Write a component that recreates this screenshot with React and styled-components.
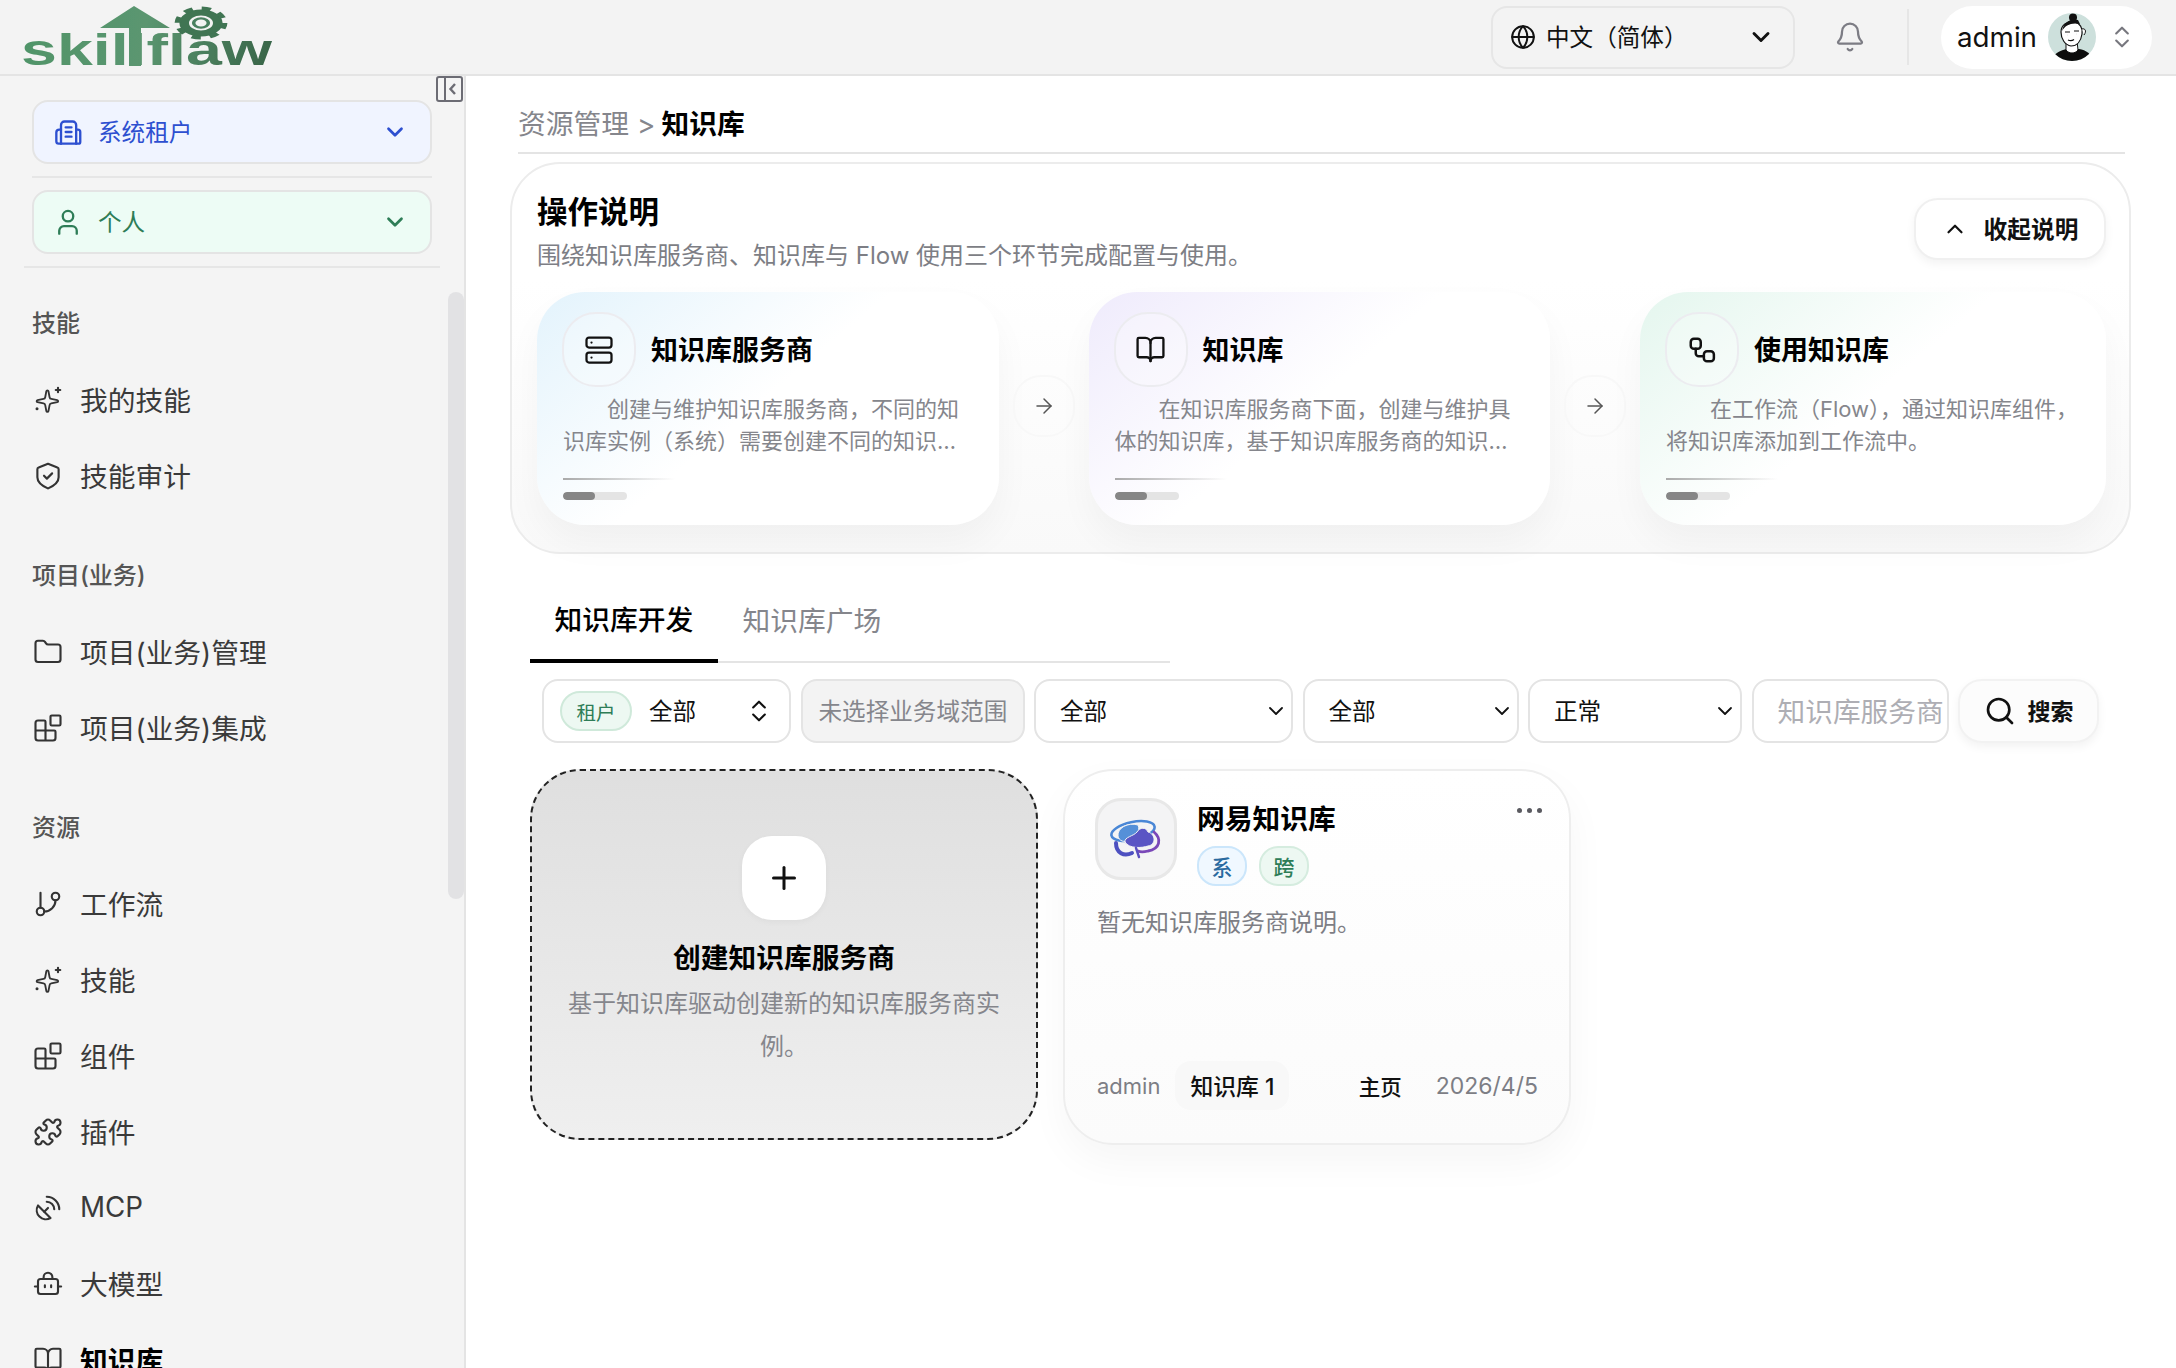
import React from "react";
import styled, { createGlobalStyle } from "styled-components";
import {
  ChevronDown, ChevronUp, ChevronsUpDown, Globe, Bell, Folder, Blocks, Puzzle,
  SatelliteDish, BookOpen, Server, ArrowRight, Plus, Search,
} from "lucide-react";

const Global = createGlobalStyle`
  html, body { margin: 0; padding: 0; background: #fff; }
  body { font-family: Inter, "Noto Sans CJK SC", sans-serif; color: #000; }
  * { box-sizing: border-box; }
`;

const Page = styled.div`
  width: 2176px; height: 1368px; overflow: hidden;
  display: grid; grid-template-rows: 76px 1fr; grid-template-columns: 466px 1fr;
`;

/* ---------- header ---------- */
const TopBar = styled.header`
  grid-column: 1 / 3; display: flex; align-items: center; justify-content: space-between;
  background: #f3f3f3; border-bottom: 2px solid #e4e4e4; padding-right: 24px;
`;
const TopRight = styled.div`display: flex; align-items: center;`;
const LangSelect = styled.div`
  width: 304px; height: 63px; border: 2px solid #e6e6e6; border-radius: 16px;
  display: flex; align-items: center; padding: 0 18px 2px 17px; font-size: 23.6px; color: #111;
  svg:first-child { margin-right: 10px; margin-top: 2px; }
  svg:last-child { margin-left: auto; margin-top: 2px; }
`;
const BellWrap = styled.div`display: flex; margin: 0 41px 0 39px; color: #7c7c84;`;
const VLine = styled.div`width: 2px; height: 56px; background: #e6e6e6; margin-right: 32px;`;
const UserPill = styled.div`
  width: 211px; height: 63px; border-radius: 32px; background: #fff; display: flex; align-items: center;
  padding-left: 16px; font-size: 27.76px; color: #111;
  > svg:nth-of-type(1) { margin-left: 11px; }
  > svg:nth-of-type(2) { margin-left: 12px; color: #77777e; }
`;

/* ---------- sidebar ---------- */
const Side = styled.aside`
  position: relative; background: #f4f4f4; border-right: 2px solid #e4e4e4;
  padding: 24px 32px 0; overflow: hidden;
`;
const CollapseBtn = styled.div`position: absolute; top: 0; right: 0; display: flex;`;
const ScrollThumb = styled.div`
  position: absolute; top: 216px; right: 0; width: 16px; height: 607px;
  border-radius: 8px; background: #e2e2e4;
`;
const ScopeSelect = styled.div`
  height: 64px; border: 2px solid #e4e4e4; border-radius: 16px; background: ${p => p.$bg}; color: ${p => p.$fg};
  display: flex; align-items: center; padding: 0 22px 2px 20px; font-size: 23.6px;
  > svg:first-child { margin-right: 16px; margin-top: 2px; }
  > svg:last-child { margin-left: auto; margin-top: 2px; }
`;
const SideRule = styled.div`
  height: 2px; background: #e6e6e6; margin: 12px ${p => p.$out ? "-8px" : "0"} ${p => p.$out ? "0" : "12px"};
`;
const NavGroup = styled.section`margin-top: ${p => p.$first ? "35px" : "41px"};`;
const NavLabel = styled.div`
  height: 40px; line-height: 42px; margin-bottom: 19px; font-size: 24px; font-weight: 500; color: #555;
`;
const NavItem = styled.div`
  height: 76px; display: flex; align-items: center; gap: 17px; padding: 0 0 2px 1px;
  font-size: 27.76px; color: ${p => p.$active ? "#000" : "#3a3a3a"}; font-weight: ${p => p.$active ? 600 : 400};
  svg { flex: none; width: 30px; height: 30px; color: #333; margin-top: 2px; }
`;

/* ---------- main ---------- */
const Main = styled.main`padding: 0 51px 0 52px; overflow: hidden; background: #fff;`;
const Crumbs = styled.div`
  height: 78px; padding-top: 29px; border-bottom: 2px solid #e4e4e4; display: flex; gap: 8px;
  font-size: 27.76px; line-height: 38px; color: #85868c;
  b { color: #000; font-weight: 600; margin-left: -2px; }
`;
const GuidePanel = styled.section`
  margin: 8px -6px 0 -8px; height: 392px; border: 2px solid #ececec; border-radius: 50px;
  background: linear-gradient(180deg, #fff 30%, #f9f9f9 100%);
  padding: 28px 23px 0 25px;
`;
const GuideHead = styled.div`display: flex; justify-content: space-between; height: 80px;`;
const GuideTitle = styled.h2`margin: 0; font-size: 30.5px; line-height: 40px; font-weight: 700;`;
const GuideSub = styled.p`margin: 8px 0 0; font-size: 24px; line-height: 32px; color: #7d7e85;`;
const CollapseGuide = styled.button`
  margin-top: 6px; width: 192px; height: 62px; border-radius: 24px; border: 2px solid #f0f0f0; background: #fff;
  box-shadow: 0 4px 10px rgba(0,0,0,.05); font: 600 23.7px Inter, "Noto Sans CJK SC", sans-serif; color: #111;
  display: flex; align-items: center; justify-content: center; gap: 16px; padding: 0 0 2px;
  svg { margin-top: 2px; }
`;
const StepRow = styled.div`display: flex; margin-top: 20px;`;
const StepCard = styled.article`
  flex: 1 1 0; height: 233px; border-radius: 48px; padding: 20px 24px 0 26px;
  background: linear-gradient(140deg, ${p => p.$tint} 0%, #ffffff 48%);
  box-shadow: 0 18px 36px rgba(0,0,0,.04);
`;
const StepHead = styled.div`display: flex; align-items: center; gap: 15px; margin-left: -1px;`;
const StepIcon = styled.div`
  width: 74px; height: 75px; border-radius: 34px; border: 2px solid #ececf0; display: flex;
  align-items: center; justify-content: center; color: #111; background: rgba(255,255,255,.25);
`;
const StepTitle = styled.h3`margin: 0 0 2px; font-size: 27px; font-weight: 700;`;
const StepDesc = styled.p`
  margin: 6px 0 0; width: ${p => p.$w}px; font-size: 22px; line-height: 32px; color: #85868c; text-indent: 2em;
  display: -webkit-box; -webkit-box-orient: vertical; -webkit-line-clamp: 2; overflow: hidden; height: 64px;
`;
const FadeRule = styled.div`
  margin-top: 21px; width: 112px; height: 2px; background: linear-gradient(90deg, #aaa, rgba(170,170,170,0));
`;
const Progress = styled.div`margin-top: 12px; width: 64px; height: 8px; border-radius: 4px; background: #e4e4e4; overflow: hidden;`;
const ProgressFill = styled.div`width: 32px; height: 8px; border-radius: 4px; background: #868686;`;
const StepLink = styled.div`
  flex: 0 0 90px; display: flex; align-items: center; justify-content: center; padding-bottom: 5px; color: #555;
`;
const StepLinkRing = styled.div`
  width: 62px; height: 62px; border-radius: 28px; border: 2px solid #f8f8f8; display: flex;
  align-items: center; justify-content: center;
`;

const Body = styled.div`padding-left: 12px;`;
const Tabs = styled.div`
  margin-top: 47px; width: 640px; height: 62px; border-bottom: 2px solid #e4e4e4; display: flex;
`;
const Tab = styled.div`
  width: 188px; height: 62px; white-space: nowrap; text-align: center; font-size: 27.76px; line-height: 38px;
  color: ${p => p.$on ? "#000" : "#85868c"}; font-weight: ${p => p.$on ? 500 : 400};
  padding-top: ${p => p.$on ? 0 : 1}px;
  border-bottom: ${p => p.$on ? "4px solid #000" : "0"};
`;
const Filters = styled.div`display: flex; gap: 9.5px; padding: 16px 0 0 12px;`;
const Field = styled.div`
  width: ${p => p.$w}px; height: 64px; flex: none; border: 2px solid #e4e4e4; border-radius: 16px; overflow: hidden;
  background: ${p => p.$off ? "#f3f3f3" : "#fff"}; color: ${p => p.$off ? "#85868c" : "#111"};
  display: flex; align-items: center; font-size: 23.6px; white-space: nowrap; padding: 0 3px 2px ${p => p.$pl}px;
  > svg { margin-left: auto; margin-top: 2px; }
`;
const FieldTag = styled.span`
  width: 72px; height: 40px; border-radius: 20px; background: #edf8f2; border: 2px solid #cfe9da; color: #2e7d57;
  display: flex; align-items: center; justify-content: center; font-size: 19.5px; margin: 2px 17px 0 0; flex: none;
`;
const Placeholder = styled.span`font-size: 27.7px; color: #aeaeb4;`;
const SearchBtn = styled.button`
  width: 141px; height: 64px; flex: none; border: 2px solid #f2f2f2; border-radius: 24px; background: #fcfcfc;
  box-shadow: 0 4px 10px rgba(0,0,0,.05); display: flex; align-items: center; justify-content: center; gap: 12px;
  font: 600 23px Inter, "Noto Sans CJK SC", sans-serif; color: #111; padding: 0 0 2px;
  svg { margin-top: 2px; }
`;
const CardGrid = styled.div`display: flex; gap: 25px; margin-top: 26px; align-items: flex-start;`;
const CreateCard = styled.article`
  width: 508px; height: 371px; border: 2px dashed #222; border-radius: 50px;
  background: linear-gradient(180deg, #dfdfdf, #efefef);
  display: flex; flex-direction: column; align-items: center; padding: 65px 30px 0; text-align: center;
`;
const PlusTile = styled.div`
  width: 84px; height: 84px; border-radius: 30px; background: #fff; box-shadow: 0 2px 6px rgba(0,0,0,.04);
  display: flex; align-items: center; justify-content: center; color: #111;
`;
const CreateTitle = styled.h3`margin: 18px 0 0; font-size: 27.76px; line-height: 40px; font-weight: 600;`;
const CreateDesc = styled.p`margin: 4px 0 0; font-size: 24px; line-height: 43px; color: #85868c;`;
const ProviderCard = styled.article`
  width: 508px; height: 376px; border: 2px solid #eeeeee; border-radius: 50px;
  background: linear-gradient(180deg, #fff, #fbfbfb); box-shadow: 0 16px 40px rgba(0,0,0,.04);
  padding: 27px 27px 33px 30px; display: flex; flex-direction: column;
`;
const ProviderHead = styled.div`display: flex;`;
const ProviderTile = styled.div`
  width: 82px; height: 82px; border-radius: 26px; border: 3px solid #e8e8e8; background: #f4f4f5;
  display: flex; align-items: center; justify-content: center; flex: none; margin-right: 20px;
`;
const ProviderName = styled.h3`margin: 1px 0 0; font-size: 27.76px; line-height: 40px; font-weight: 600;`;
const BadgeRow = styled.div`display: flex; gap: 12px; margin-top: 7px;`;
const Badge = styled.span`
  width: 50px; height: 40px; border-radius: 19px; border: 2px solid ${p => p.$line}; background: ${p => p.$bg}; color: ${p => p.$fg};
  display: flex; align-items: center; justify-content: center; font-size: 21px; font-weight: 500;
`;
const MoreDots = styled.div`margin-left: auto; display: flex; gap: 5px; height: 6px; margin-top: 10px;`;
const MoreDot = styled.i`width: 5px; height: 5px; border-radius: 50%; background: #5a5a60;`;
const ProviderDesc = styled.p`margin: 19px 0 0; font-size: 24px; line-height: 36px; color: #7d7e85; padding-left: 2px;`;
const ProviderFoot = styled.div`margin-top: auto; display: flex; align-items: center; padding: 0 4px 0 2px; font-size: 22px; color: #7d7e85;`;
const CountPill = styled.span`
  height: 49px; padding: 0 15px; margin-left: 15px; border-radius: 16px; background: #f8f8f8; color: #111;
  display: flex; align-items: center; font-weight: 500; font-size: 22.8px;
`;
const HomeLink = styled.span`margin-left: auto; margin-right: 34px; color: #111; font-weight: 500; font-size: 21.5px;`;
const DateText = styled.span`font-size: 23px;`;

/* ---------- drawn icons ---------- */
const Svg = ({ s = 24, w = 2, children, ...r }) => (
  <svg width={s} height={s} viewBox="0 0 24 24" fill="none" stroke="currentColor" strokeWidth={w} strokeLinecap="round" strokeLinejoin="round" {...r}>{children}</svg>
);
const SparkIcon = () => (
  <Svg w={1.7}>
    <path transform="translate(1.2 2.6) scale(.86)" d="M11.017 2.814a1 1 0 0 1 1.966 0l1.051 5.558a2 2 0 0 0 1.594 1.594l5.558 1.051a1 1 0 0 1 0 1.966l-5.558 1.051a2 2 0 0 0-1.594 1.594l-1.051 5.558a1 1 0 0 1-1.966 0l-1.051-5.558a2 2 0 0 0-1.594-1.594l-5.558-1.051a1 1 0 0 1 0-1.966l5.558-1.051a2 2 0 0 0 1.594-1.594z" />
    <path d="M20 2.200v3.600M18.200 4h3.600" /><path d="M3.200 19h.01" strokeWidth="2.400" />
  </Svg>
);
const ShieldIcon = () => (
  <Svg w={1.7}>
    <path d="M12 2.200l7.500 3c.6.2 1 .8 1 1.400V13c0 3.800-3.600 6.700-8 8.700a1 1 0 0 1-1 0c-4.400-2-8-4.900-8-8.700V6.600c0-.6.4-1.200 1-1.400z" />
    <path d="M8.800 11.800l2.300 2.300 4.200-4.200" />
  </Svg>
);
const FlowIcon = () => (
  <Svg w={1.7}>
    <path d="M6 15V3" /><circle cx="6" cy="18" r="3" /><circle cx="18" cy="6" r="3" /><path d="M18 9a9 9 0 0 1-9 9" />
  </Svg>
);
const BotIcon = () => (
  <Svg w={1.7}>
    <rect x="4" y="8" width="16" height="12" rx="2" /><path d="M8.500 8V6.500a3.500 3.500 0 0 1 7 0V8" />
    <path d="M1.500 14H4M20 14h2.500" /><path d="M9.500 13v1.500M14.500 13v1.500" />
  </Svg>
);
const BuildingIcon = () => (
  <Svg s={28} w={2}>
    <path d="M6 22V6a3 3 0 0 1 3-3h7a3 3 0 0 1 3 3v16" />
    <path d="M6 10H4.500A2.500 2.500 0 0 0 2 12.500V20a2 2 0 0 0 2 2h17a1.500 1.500 0 0 0 1.500-1.500V12a2 2 0 0 0-2-2H19" />
    <path d="M10 8h5M10 12h5M10 16h5" />
  </Svg>
);
const PersonIcon = () => (
  <Svg s={28} w={2}>
    <circle cx="12" cy="7" r="4.500" /><path d="M4.500 22v-2.500a4 4 0 0 1 4-4h7a4 4 0 0 1 4 4V22" />
  </Svg>
);
const LinkIcon = () => (
  <Svg s={30} w={2}>
    <rect x="3" y="3" width="8" height="8" rx="2.500" /><rect x="13.500" y="13" width="8" height="8" rx="2.500" />
    <path d="M7 11v3.500a2.500 2.500 0 0 0 2.500 2.500h4" />
  </Svg>
);
const CollapseIcon = () => (
  <svg width="28" height="26" viewBox="0 0 28 26" fill="none" stroke="#6c6c74" strokeWidth="2">
    <rect x="1" y="1" width="25" height="24" rx="2" /><path d="M9 1v24" /><path d="M19 8l-4.500 5 4.500 5" strokeWidth="2.400" />
  </svg>
);
const Logo = () => (
  <svg width="290" height="74" viewBox="0 0 290 74" style={{ display: "block" }}>
    <defs>
      <linearGradient id="lg" gradientUnits="userSpaceOnUse" x1="22" y1="0" x2="272" y2="40">
        <stop offset="0" stopColor="#4f9468" /><stop offset=".5" stopColor="#5b9670" /><stop offset="1" stopColor="#396649" />
      </linearGradient>
      <filter id="sf"><feGaussianBlur stdDeviation=".5" /></filter>
    </defs>
    <g filter="url(#sf)">
      <path d="M134 6L170 28H141V66H129V28H100z" fill="url(#lg)" />
      <text x="21" y="65" fontFamily="Liberation Sans" fontWeight="700" fontSize="44" textLength="251" lengthAdjust="spacingAndGlyphs" fill="url(#lg)">skillflaw</text>
      <g transform="translate(201 23) scale(1.6 1)" fill="none" stroke="#3f7452">
        <circle r="10.500" strokeWidth="6" />
        <circle r="14.500" strokeWidth="4" strokeDasharray="5.700 5.690" />
        <circle r="4.600" strokeWidth="2.200" stroke="#4a8060" />
      </g>
    </g>
  </svg>
);
const Avatar = () => (
  <svg width="48" height="48" viewBox="0 0 48 48">
    <defs><clipPath id="ac"><ellipse cx="24" cy="24" rx="24" ry="24" /></clipPath></defs>
    <g clipPath="url(#ac)">
      <rect width="48" height="48" fill="#cde0dc" />
      <path d="M4 48c1-8 9-11 15-12h12c7 1 13 5 14 12z" fill="#0c0c0c" />
      <path d="M18 30v7c3 4 9 4 12 0l-1-9z" fill="#fff" stroke="#111" strokeWidth="1" />
      <path d="M13 19c0-7 6-11 13-10 6 1 9 6 8 12-1 7-5 12-11 12-6-1-10-7-10-14z" fill="#fff" stroke="#111" strokeWidth="1.200" />
      <path d="M14 18c3-6 10-9 18-7l-2-4c-6-2-14 1-16 11z" fill="#111" />
      <circle cx="25" cy="4.500" r="4" fill="#111" />
      <path d="M34 16c3-1 5 2 2 6" fill="#fff" stroke="#111" strokeWidth="1" />
      <path d="M17 19h5M26 18h5M19 22h.1M28 21h.1M20 27c2 1 4 1 6-.500" stroke="#111" strokeWidth="1.200" fill="none" />
    </g>
  </svg>
);
const CloudLogo = () => (
  <svg width="52" height="40" viewBox="0 0 52 40">
    <ellipse cx="23" cy="12" rx="22" ry="9" transform="rotate(-12 23 12)" fill="none" stroke="#4a87d6" strokeWidth="2.600" />
    <path d="M8 17C7 9 18 3 28 6c3 6-3 12-8 15-6 3-11 1-12-4z" fill="#5590d8" stroke="#f4f4f5" strokeWidth="1" />
    <path d="M15 23c-1-5 9-6 12-10 3-5 9-5 11 0 8 2 8 13 0 14-6 2-19 3-23-4z" fill="#5a55c4" stroke="#f4f4f5" strokeWidth="1" />
    <path d="M44 13c8 7 6 17-6 19-4 1-8 1-10 0" fill="none" stroke="#7a48b8" strokeWidth="2.800" strokeLinecap="round" />
    <path d="M6 24c0 10 8 14 16 10" fill="none" stroke="#4d50c0" strokeWidth="4" strokeLinecap="round" />
    <path d="M26 29l3 9" stroke="#5a4fc0" strokeWidth="2.400" strokeLinecap="round" />
  </svg>
);

const navGroups = [
  { label: "技能", items: [[SparkIcon, "我的技能"], [ShieldIcon, "技能审计"]] },
  { label: "项目(业务)", items: [[Folder, "项目(业务)管理"], [Blocks, "项目(业务)集成"]] },
  { label: "资源", items: [[FlowIcon, "工作流"], [SparkIcon, "技能"], [Blocks, "组件"], [Puzzle, "插件"], [SatelliteDish, "MCP"], [BotIcon, "大模型"], [BookOpen, "知识库", true]] },
];
const steps = [
  { tint: "#e3f3fc", w: 398, icon: <Server size={30} strokeWidth={1.8} />, title: "知识库服务商", desc: "创建与维护知识库服务商，不同的知识库实例（系统）需要创建不同的知识库服务商，并配置对应的连接信息。" },
  { tint: "#efebfc", w: 398, icon: <BookOpen size={31} strokeWidth={1.8} />, title: "知识库", desc: "在知识库服务商下面，创建与维护具体的知识库，基于知识库服务商的知识库能力进行内容管理与检索。" },
  { tint: "#e4f6ee", w: 416, icon: <LinkIcon />, title: "使用知识库", desc: "在工作流（Flow），通过知识库组件，将知识库添加到工作流中。" },
];

export default function App() {
  return (
    <Page>
      <Global />
      <TopBar>
        <Logo />
        <TopRight>
          <LangSelect>
            <Globe size={26} strokeWidth={1.8} />中文（简体）<ChevronDown size={28} strokeWidth={2.5} />
          </LangSelect>
          <BellWrap><Bell size={32} strokeWidth={1.7} /></BellWrap>
          <VLine />
          <UserPill>admin<Avatar /><ChevronsUpDown size={28} strokeWidth={1.8} /></UserPill>
        </TopRight>
      </TopBar>

      <Side>
        <CollapseBtn><CollapseIcon /></CollapseBtn>
        <ScrollThumb />
        <ScopeSelect $bg="#f0f4ff" $fg="#2d4fd0"><BuildingIcon />系统租户<ChevronDown size={26} strokeWidth={2.5} /></ScopeSelect>
        <SideRule />
        <ScopeSelect $bg="#edfcf5" $fg="#2e7d57"><PersonIcon />个人<ChevronDown size={26} strokeWidth={2.5} /></ScopeSelect>
        <SideRule $out />
        {navGroups.map((g, i) => (
          <NavGroup key={g.label} $first={i === 0}>
            <NavLabel>{g.label}</NavLabel>
            {g.items.map(([Ico, text, active]) => (
              <NavItem key={text} $active={active}><Ico strokeWidth={1.7} />{text}</NavItem>
            ))}
          </NavGroup>
        ))}
      </Side>

      <Main>
        <Crumbs>资源管理<span>&gt;</span><b>知识库</b></Crumbs>
        <GuidePanel>
          <GuideHead>
            <div>
              <GuideTitle>操作说明</GuideTitle>
              <GuideSub>围绕知识库服务商、知识库与 Flow 使用三个环节完成配置与使用。</GuideSub>
            </div>
            <CollapseGuide><ChevronUp size={26} strokeWidth={2} />收起说明</CollapseGuide>
          </GuideHead>
          <StepRow>
            {steps.map((s, i) => (
              <React.Fragment key={s.title}>
                {i > 0 && <StepLink><StepLinkRing><ArrowRight size={24} strokeWidth={1.5} /></StepLinkRing></StepLink>}
                <StepCard $tint={s.tint}>
                  <StepHead><StepIcon>{s.icon}</StepIcon><StepTitle>{s.title}</StepTitle></StepHead>
                  <StepDesc $w={s.w}>{s.desc}</StepDesc>
                  <FadeRule />
                  <Progress><ProgressFill /></Progress>
                </StepCard>
              </React.Fragment>
            ))}
          </StepRow>
        </GuidePanel>

        <Body>
          <Tabs>
            <Tab $on>知识库开发</Tab>
            <Tab>知识库广场</Tab>
          </Tabs>
          <Filters>
            <Field $w={249} $pl={16}><FieldTag>租户</FieldTag>全部<ChevronsUpDown size={28} strokeWidth={1.8} style={{ marginRight: 13 }} /></Field>
            <Field $w={224} $pl={16} $off>未选择业务域范围</Field>
            <Field $w={259} $pl={24}>全部<ChevronDown size={24} strokeWidth={1.8} /></Field>
            <Field $w={216} $pl={24}>全部<ChevronDown size={24} strokeWidth={1.8} /></Field>
            <Field $w={214} $pl={24}>正常<ChevronDown size={24} strokeWidth={1.8} /></Field>
            <Field $w={197} $pl={24}><Placeholder>知识库服务商</Placeholder></Field>
            <SearchBtn><Search size={32} strokeWidth={2} />搜索</SearchBtn>
          </Filters>
          <CardGrid>
            <CreateCard>
              <PlusTile><Plus size={36} strokeWidth={2} /></PlusTile>
              <CreateTitle>创建知识库服务商</CreateTitle>
              <CreateDesc>基于知识库驱动创建新的知识库服务商实例。</CreateDesc>
            </CreateCard>
            <ProviderCard>
              <ProviderHead>
                <ProviderTile><CloudLogo /></ProviderTile>
                <div>
                  <ProviderName>网易知识库</ProviderName>
                  <BadgeRow>
                    <Badge $bg="#f0f8ff" $line="#cbe6fb" $fg="#2a6aa0">系</Badge>
                    <Badge $bg="#edf8f2" $line="#d5ecdf" $fg="#2e7d57">跨</Badge>
                  </BadgeRow>
                </div>
                <MoreDots><MoreDot /><MoreDot /><MoreDot /></MoreDots>
              </ProviderHead>
              <ProviderDesc>暂无知识库服务商说明。</ProviderDesc>
              <ProviderFoot>
                admin
                <CountPill>知识库 1</CountPill>
                <HomeLink>主页</HomeLink>
                <DateText>2026/4/5</DateText>
              </ProviderFoot>
            </ProviderCard>
          </CardGrid>
        </Body>
      </Main>
    </Page>
  );
}
